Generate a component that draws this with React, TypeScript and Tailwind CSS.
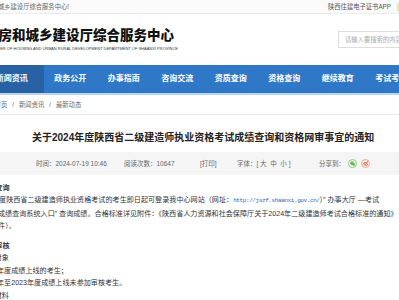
import React from 'react';
import { FaWeixin, FaWeibo } from 'react-icons/fa';

const navItems = ['新闻资讯', '政务公开', '办事指南', '咨询交流', '资质查询', '资格查询', '继续教育', '考试考务'];

export default function App() {
  return (
    <div className="w-[399px] h-[300px] overflow-hidden bg-white text-[#333] font-['Liberation_Sans','Noto_Sans_CJK_SC',sans-serif]">
      {/* Top bar */}
      <div className="flex h-[14px] items-center border-b border-[#ececec] bg-[#fafafa]">
        <span className="ml-[-65px] whitespace-nowrap text-[6.3px] text-[#666]">欢迎访问陕西省住房和城乡建设厅综合服务中心!</span>
        <div className="ml-auto flex items-center">
          <span className="whitespace-nowrap text-[6.3px] text-[#555]">陕西住建电子证书APP</span>
          <span className="ml-[6px] mr-[-8px] h-[8px] w-[10px] bg-[#f6e2a6]" />
        </div>
      </div>

      {/* Header */}
      <div className="flex h-[51px] items-start">
        <div className="ml-[-55.5px] flex w-[233.5px] shrink-0 flex-col pt-[13.5px]">
          <div className="whitespace-nowrap text-[13.5px] font-black leading-[15px] text-[#111]">陕西省住房和城乡建设厅综合服务中心</div>
          <div className="mt-[3px] flex justify-end">
            <span className="whitespace-nowrap text-[4px] leading-[5px] text-[#333] uppercase">Comprehensive Service Center of Housing and Urban Rural Development Department of Shaanxi Province</span>
          </div>
        </div>
        <div className="ml-auto mr-[-89px] mt-[17px] flex h-[17px] w-[150px] shrink-0 items-center border border-[#dedede] bg-white pl-[6px]">
          <span className="whitespace-nowrap text-[6.3px] text-[#aaa]">请输入要搜索的内容</span>
        </div>
      </div>

      {/* Nav */}
      <div className="flex h-[28px] bg-[#2f78c7]">
        <div className="ml-[-20px] flex">
          {navItems.map((item, i) => (
            <div
              key={item}
              className={
                i === 0
                  ? 'flex w-[63.5px] shrink-0 items-center justify-center bg-[#2862a4] text-[8px] font-bold text-white whitespace-nowrap'
                  : 'flex w-[53.5px] shrink-0 items-center justify-center text-[8px] font-bold text-white whitespace-nowrap'
              }
            >
              {item}
            </div>
          ))}
        </div>
      </div>
      <div className="h-[1.5px] bg-[#bcd5ef]" />

      {/* Breadcrumb */}
      <div className="flex h-[20.5px] items-center border-b border-[#e6e6e6] text-[6.3px] text-[#666]">
        <span className="ml-[-5.3px] whitespace-nowrap">首页</span>
        <span className="mx-[5px]">/</span>
        <span className="whitespace-nowrap">新闻资讯</span>
        <span className="mx-[5px]">/</span>
        <span className="whitespace-nowrap">最新动态</span>
      </div>

      {/* Title */}
      <div className="h-[37px] pt-[17px]">
        <div className="ml-[32px] whitespace-nowrap text-[10px] font-bold leading-[12px] text-[#222]">
          关于2024年度陕西省二级建造师执业资格考试成绩查询和资格网审事宜的通知
        </div>
      </div>

      {/* Meta */}
      <div className="flex h-[23px] items-center bg-[#f5f5f5] pl-[36px] text-[6.5px] text-[#666]">
        <span className="w-[88px] shrink-0 whitespace-nowrap">时间：2024-07-19 10:46</span>
        <span className="w-[76px] shrink-0 whitespace-nowrap">阅读次数：10647</span>
        <span className="w-[37px] shrink-0 whitespace-nowrap">[打印]</span>
        <span className="w-[82px] shrink-0 whitespace-nowrap">字体：[ 大&nbsp;&nbsp;中&nbsp;&nbsp;小 ]</span>
        <span className="w-[29px] shrink-0 whitespace-nowrap">分享到：</span>
        <span className="flex h-[9px] w-[9px] shrink-0 items-center justify-center rounded-full border border-[#8fcd7c] bg-[#eef8ea]">
          <FaWeixin size={5.5} className="text-[#5cb547]" />
        </span>
        <span className="ml-[4px] flex h-[9px] w-[9px] shrink-0 items-center justify-center rounded-full border border-[#f3a88e] bg-[#fdf0ea]">
          <FaWeibo size={5.5} className="text-[#e8553a]" />
        </span>
      </div>

      {/* Content */}
      <div className="pt-[6.75px] text-[7.1px] leading-[12.5px] text-[#333]">
        <div className="ml-[-33px] whitespace-nowrap font-bold">一、成绩查询</div>
        <div className="ml-[-38px] whitespace-nowrap">
          参加2024年度陕西省二级建造师执业资格考试的考生即日起可登录我中心网站（网址：
          <span className="font-['Liberation_Mono',monospace] text-[6px] tracking-[-0.4px] text-[#2a63b6]">http://jszf.shaanxi.gov.cn/</span>
          ）” 办事大厅 —考试
        </div>
        <div className="ml-[-2px] whitespace-nowrap">
          成绩查询系统入口” 查询成绩。合格标准详见附件：《陕西省人力资源和社会保障厅关于2024年二级建造师考试合格标准的通知》
        </div>
        <div className="ml-[-9px] whitespace-nowrap">附件）。</div>
        <div className="ml-[-33px] mt-[7px] whitespace-nowrap font-bold">二、资格审核</div>
        <div className="ml-[-40.7px] whitespace-nowrap">（一）审核对象</div>
        <div className="ml-[-24.7px] whitespace-nowrap">1.2024年度成绩上线的考生；</div>
        <div className="ml-[-24.7px] whitespace-nowrap">2.2021年至2023年度成绩上线未参加审核考生。</div>
        <div className="ml-[-40.7px] whitespace-nowrap">（二）审核材料</div>
      </div>
    </div>
  );
}
